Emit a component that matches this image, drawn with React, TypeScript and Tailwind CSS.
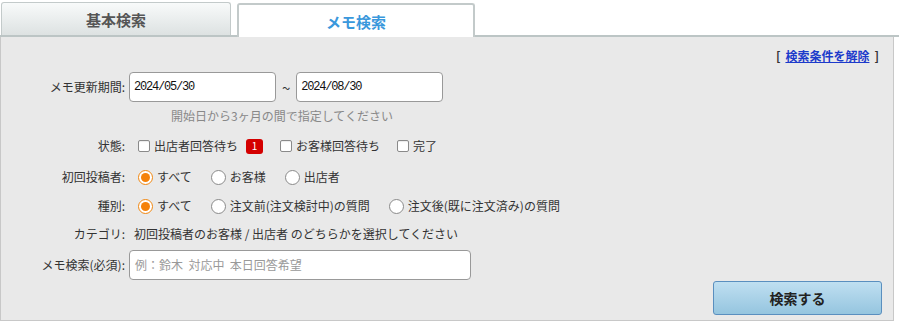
import React from "react";

const JP = "font-['Noto_Sans_CJK_JP','Noto_Sans',sans-serif]";

function Check(props: { label: string; badge?: string }) {
  return (
    <label className="flex items-center gap-[4px]">
      <span className="block h-[12px] w-[12px] rounded-[2px] border border-[#8a8a8a] bg-white shadow-[inset_0_1px_1px_rgba(0,0,0,0.08)]" />
      <span>{props.label}</span>
      {props.badge && (
        <span className="ml-[4px] flex h-[15px] w-[17px] items-center justify-center rounded-[3px] bg-[#d40000] text-[10px] leading-none text-white">
          {props.badge}
        </span>
      )}
    </label>
  );
}

function Radio(props: { label: string; checked?: boolean }) {
  return (
    <label className="flex items-center gap-[4px]">
      {props.checked ? (
        <span className="flex h-[15px] w-[15px] items-center justify-center rounded-full border-[1.5px] border-[#f0860f] bg-white">
          <span className="block h-[9px] w-[9px] rounded-full bg-[#f5820a]" />
        </span>
      ) : (
        <span className="block h-[15px] w-[15px] rounded-full border border-[#8a8a8a] bg-white" />
      )}
      <span>{props.label}</span>
    </label>
  );
}

function Row(props: { label: string; className?: string; children: React.ReactNode }) {
  return (
    <div className={"flex items-center " + (props.className ?? "")}>
      <div className="w-[125px] shrink-0 pr-[1px] text-right text-[#333]">{props.label}</div>
      {props.children}
    </div>
  );
}

export default function App() {
  return (
    <div className={"h-[323px] w-[899px] bg-white text-[12px] leading-none text-[#333] " + JP}>
      {/* tabs */}
      <div className="flex h-[37px] items-end border-b-2 border-[#bcc5c5] pl-[1px]">
        <div className="flex h-[33px] w-[230px] items-center justify-center rounded-t-[3px] border border-b-0 border-[#c3caca] bg-gradient-to-b from-[#f8fafa] to-[#dde2e2] text-[15px] font-bold text-[#555]">
          基本検索
        </div>
        <div className="relative -mb-[2px] ml-[6px] flex h-[34px] w-[238px] items-center justify-center rounded-t-[3px] border-2 border-b-0 border-[#c3caca] bg-white pt-[1px] text-[15px] font-semibold text-[#3a98dc]">
          メモ検索
        </div>
      </div>

      {/* panel */}
      <div className="h-[284px] w-[894px] border-x border-b border-[#c8c8c8] bg-[#e9e9e9] pt-[9px]">
        <div className="flex h-[20px] items-center justify-end pr-[14px] text-[12px] font-bold">
          <span className="text-[#333]">[</span>
          <a href="#" className="mx-[5px] text-[#1c3acb] underline">
            検索条件を解除
          </a>
          <span className="text-[#333]">]</span>
        </div>

        <Row label="メモ更新期間:" className="mt-[6px] h-[30px]">
          <div className="ml-[3px] flex items-center">
            <div className="flex h-[30px] w-[147px] items-center rounded-[4px] border border-[#999] bg-white pl-[4px] font-['Liberation_Mono',monospace] text-[12px] tracking-[-1.2px] text-[#111]">
              2024/05/30
            </div>
            <span className="mx-[6px] text-[15px] text-[#333]">~</span>
            <div className="flex h-[30px] w-[147px] items-center rounded-[4px] border border-[#999] bg-white pl-[4px] font-['Liberation_Mono',monospace] text-[12px] tracking-[-1.2px] text-[#111]">
              2024/08/30
            </div>
          </div>
        </Row>

        <div className="mt-[6px] flex h-[16px] items-center pl-[170px] text-[#888]">
          開始日から3ヶ月の間で指定してください
        </div>

        <Row label="状態:" className="mt-[12px] h-[20px]">
          <div className="ml-[12px] flex items-center gap-[17px]">
            <Check label="出店者回答待ち" badge="1" />
            <Check label="お客様回答待ち" />
            <Check label="完了" />
          </div>
        </Row>

        <Row label="初回投稿者:" className="mt-[11px] h-[20px]">
          <div className="ml-[12px] flex items-center gap-[19px]">
            <Radio label="すべて" checked />
            <Radio label="お客様" />
            <Radio label="出店者" />
          </div>
        </Row>

        <Row label="種別:" className="mt-[9px] h-[20px]">
          <div className="ml-[12px] flex items-center gap-[19px]">
            <Radio label="すべて" checked />
            <Radio label="注文前(注文検討中)の質問" />
            <Radio label="注文後(既に注文済み)の質問" />
          </div>
        </Row>

        <Row label="カテゴリ:" className="mt-[8px] h-[20px]">
          <div className="ml-[8px]">初回投稿者のお客様 / 出店者 のどちらかを選択してください</div>
        </Row>

        <Row label="メモ検索(必須):" className="mt-[6px] h-[30px]">
          <div className="ml-[3px] flex h-[30px] w-[342px] items-center rounded-[4px] border border-[#999] bg-white pl-[5px] text-[12px] text-[#999]">
            例：鈴木&nbsp;&nbsp;対応中&nbsp;&nbsp;本日回答希望
          </div>
        </Row>

        <div className="mt-[1px] flex justify-end pr-[11px]">
          <button
            type="button"
            className="h-[34px] w-[169px] rounded-[3px] border border-[#5a8fbf] bg-gradient-to-b from-[#bfdff1] to-[#95c5df] text-[14px] font-bold text-[#222]"
          >
            検索する
          </button>
        </div>
      </div>
    </div>
  );
}
